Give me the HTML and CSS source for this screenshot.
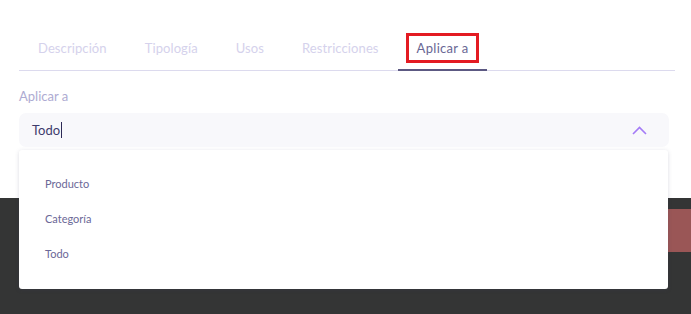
FILE: index.html
```html
<!DOCTYPE html>
<html lang="es">
<head>
<meta charset="UTF-8">
<meta name="viewport" content="width=device-width, initial-scale=1.0">
<title>Aplicar a</title>
<link rel="stylesheet" href="styles.css">
</head>
<body>
<div class="panel">
    <ul class="tabs">
        <li class="tab">Descripción</li>
        <li class="tab">Tipología</li>
        <li class="tab">Usos</li>
        <li class="tab">Restricciones</li>
        <li class="tab active"><span class="marker">Aplicar a</span></li>
    </ul>
    <div class="field">
        <label class="field-label">Aplicar a</label>
        <div class="select">
            <div class="select-box">
                <span class="select-value">Todo<span class="caret"></span></span>
                <svg class="chevron" width="15" height="9" viewBox="0 0 15 9">
                    <path d="M1 8 L7.5 1.5 L14 8" fill="none" stroke="#a47bf6" stroke-width="1.6"/>
                </svg>
            </div>
            <ul class="options">
                <li class="option">Producto</li>
                <li class="option">Categoría</li>
                <li class="option">Todo</li>
            </ul>
        </div>
    </div>
</div>
<div class="footer">
    <button class="button-save" aria-label="Guardar"></button>
</div>
</body>
</html>
```

FILE: styles.css
```css
body {
    margin: 0;
    font-family: "Lato", "Open Sans", sans-serif;
    background-color: #343535;
}
.panel {
    background-color: #ffffff;
    padding: 26px 16px 51px 19px;
}
.tabs {
    list-style: none;
    margin: 0;
    padding: 0;
    display: flex;
    border-bottom: 1px solid #dcdaee;
}
.tab {
    padding: 13px 19px 12px;
    margin-bottom: -1px;
    border-bottom: 2px solid transparent;
    font-size: 13px;
    line-height: 18px;
    letter-spacing: 0.1px;
    color: #d5d2ec;
}
.tab.active {
    padding: 7px 8px 6px;
    border-bottom-color: #5c5982;
    color: #6a6794;
}
.marker {
    display: block;
    border: 3px solid #e31b22;
    padding: 3px 8px 3px 8px;
    letter-spacing: 0.3px;
}
.field {
    margin-top: 16px;
    margin-right: 6px;
}
.field-label {
    display: block;
    font-size: 13px;
    line-height: 18px;
    color: #aeabd2;
    margin-bottom: 8px;
}
.select {
    position: relative;
}
.select-box {
    height: 34px;
    background-color: #f8f8fb;
    border-radius: 7px;
    display: flex;
    align-items: center;
    justify-content: space-between;
    padding: 0 22px 0 13px;
}
.select-value {
    font-size: 13px;
    color: #3e3b6c;
    display: flex;
    align-items: center;
}
.caret {
    display: inline-block;
    width: 1px;
    height: 16px;
    margin-left: 1px;
    background-color: #2d2a55;
}
.chevron {
    display: block;
}
.options {
    position: absolute; /* menu desplegable sobre el contenido */
    top: calc(100% + 3px);
    left: 0;
    right: 1px;
    list-style: none;
    margin: 0;
    padding: 16px 0 18px;
    background-color: #ffffff;
    border-radius: 3px;
    box-shadow: 0 1px 4px rgba(60, 60, 100, 0.18);
    z-index: 2;
}
.option {
    padding: 0 26px;
    height: 35px;
    line-height: 35px;
    font-size: 11px;
    color: #6b6897;
}
.footer {
    height: 116px;
    display: flex;
    justify-content: flex-end;
    align-items: flex-start;
    padding-top: 11px;
    box-sizing: border-box;
}
.button-save {
    width: 90px;
    height: 43px;
    border: none;
    background-color: #9a5656;
}
```
